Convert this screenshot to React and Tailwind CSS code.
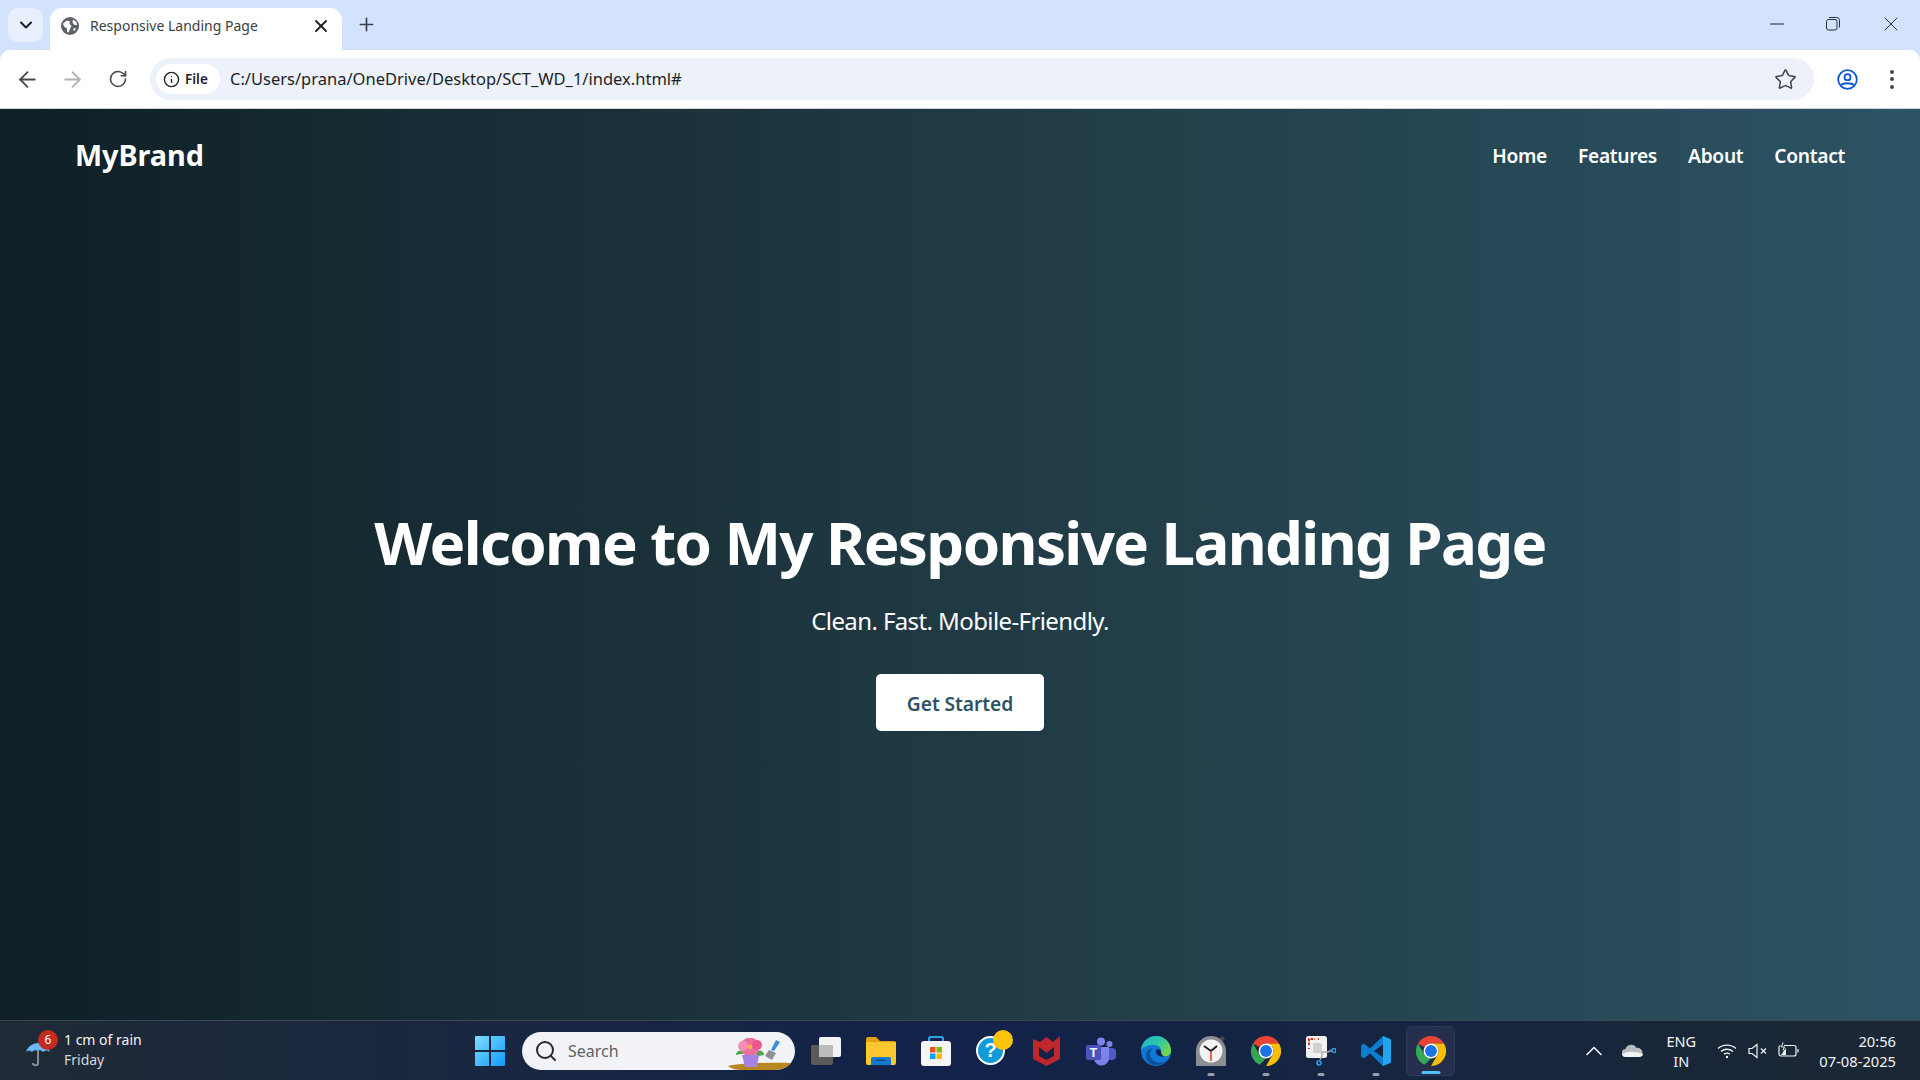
import { ArrowLeft, ArrowRight, RotateCw, Info, Star, X, Plus, ChevronDown, ChevronUp, Search, Minus } from 'lucide-react';

const NAV = ['Home', 'Features', 'About', 'Contact'];
const UI = "font-['Open_Sans','Noto_Sans',sans-serif]";

function Globe() {
  return (
    <svg width="18" height="18" viewBox="0 0 18 18">
      <circle cx="9" cy="9" r="9" fill="#5f6368" />
      <path d="M2 6.5 L6 3.5 L9 4.5 L8.5 7 L10.5 9 L9 12 L7.5 15.5 L6 15 L6 11.5 L3 9.5Z M12 2.5 L15.5 5 L16 8 L13.5 8 L11.5 5.5Z M13 11 L15 11.5 L13.5 14 L12 13Z" fill="#fff" />
    </svg>
  );
}

function RestoreIcon() {
  return (
    <svg width="14" height="14" viewBox="0 0 14 14" fill="none" stroke="#2b2f36" strokeWidth="1">
      <rect x="0.5" y="2.5" width="10.5" height="10.5" rx="2" />
      <path d="M3 0.5 H10.5 A3 3 0 0 1 13.5 3.5 V10.5" />
    </svg>
  );
}

function ProfileIcon() {
  return (
    <svg width="21" height="21" viewBox="0 0 21 21" fill="none" stroke="#0b57d0" strokeWidth="1.8">
      <circle cx="10.5" cy="10.5" r="9.3" />
      <circle cx="10.5" cy="8.2" r="3" />
      <path d="M4 16.2 C6 13.6 15 13.6 17 16.2" />
    </svg>
  );
}

function Umbrella() {
  return (
    <svg width="26" height="26" viewBox="0 0 26 26">
      <path d="M1 10 C3 3 10 1 13 1 C18 1 23 4 25 10 C22 8 20 8 18 10 C16 8 14 8 13 9 C11 8 9 8 7 10 C5 8 3 8 1 10Z" fill="#6cb8f7" />
      <path d="M13 9 V21 C13 24 8 24 8 21" fill="none" stroke="#8a8d90" strokeWidth="2" />
    </svg>
  );
}

function WinLogo() {
  return (
    <svg width="30" height="30" viewBox="0 0 30 30">
      <defs>
        <linearGradient id="wl" x1="0" y1="0" x2="1" y2="1">
          <stop offset="0" stopColor="#7fdcff" />
          <stop offset="1" stopColor="#0f9bff" />
        </linearGradient>
      </defs>
      <path d="M1 0 H14 V14 H0 V1 A1 1 0 0 1 1 0Z M16 0 H29 A1 1 0 0 1 30 1 V14 H16Z M0 16 H14 V30 H1 A1 1 0 0 1 0 29Z M16 16 H30 V29 A1 1 0 0 1 29 30 H16Z" fill="url(#wl)" />
    </svg>
  );
}

function FlowerPot() {
  return (
    <svg width="64" height="32" viewBox="0 0 64 32">
      <path d="M0 28 C14 25 50 24 64 25 C60 31 56 32 50 32 H14 C8 32 4 31 0 28Z" fill="#b8871f" />
      <path d="M8 17 C8 12 14 11 19 15 Z M26 15 C30 11 36 12 36 17 L30 18Z" fill="#4fa64a" />
      <circle cx="22" cy="9" r="9.5" fill="#ee6f9f" />
      <circle cx="15" cy="8" r="5" fill="#f48fb5" />
      <circle cx="29" cy="7" r="5" fill="#e85a8e" />
      <circle cx="22" cy="9" r="2.4" fill="#f4b23c" />
      <path d="M14 17 H31 L29 29 H17Z" fill="#a583e4" />
      <path d="M48 2 L52 4 L46 13 L43 12Z" fill="#3b8fdb" />
      <path d="M41 12 L48 15 L44 22 L37 18Z" fill="#8d9296" />
    </svg>
  );
}

function TaskView() {
  return (
    <svg width="30" height="28" viewBox="0 0 30 28">
      <rect x="8" y="0" width="22" height="20" rx="2" fill="#f3f3f3" />
      <rect x="0" y="8" width="22" height="20" rx="2" fill="#5a5a5a" />
      <rect x="8" y="8" width="14" height="12" fill="#bcbcbc" />
    </svg>
  );
}

function Explorer() {
  return (
    <svg width="30" height="28" viewBox="0 0 30 28">
      <path d="M0 2 A2 2 0 0 1 2 0 H10 L14 4 H28 A2 2 0 0 1 30 6 V10 H0Z" fill="#e5a00f" />
      <path d="M0 5 H30 V26 A2 2 0 0 1 28 28 H2 A2 2 0 0 1 0 26Z" fill="#fdc82f" />
      <path d="M5 28 V22 A2 2 0 0 1 7 20 H23 A2 2 0 0 1 25 22 V28Z" fill="#1479cf" />
      <rect x="10" y="22.5" width="10" height="1.5" fill="#0d4f8b" />
    </svg>
  );
}

function Store() {
  return (
    <svg width="30" height="30" viewBox="0 0 30 30">
      <path d="M8 6 V2 A1.5 1.5 0 0 1 9.5 1 H20.5 A1.5 1.5 0 0 1 22 2 V6" fill="none" stroke="#2aa7e8" strokeWidth="2" />
      <rect x="0" y="5" width="30" height="25" rx="3" fill="#f5f5f5" />
      <rect x="9" y="11" width="5.5" height="5.5" fill="#f25022" />
      <rect x="15.5" y="11" width="5.5" height="5.5" fill="#7fba00" />
      <rect x="9" y="17.5" width="5.5" height="5.5" fill="#00a4ef" />
      <rect x="15.5" y="17.5" width="5.5" height="5.5" fill="#ffb900" />
    </svg>
  );
}

function Help() {
  return (
    <div className="relative w-[30px] h-[30px]">
      <div className="w-[29px] h-[29px] rounded-full bg-[#0f9bd7] border-2 border-white flex items-center justify-center text-white font-bold text-[20px] leading-none font-['Liberation_Sans',sans-serif]">?</div>
      <div className="absolute -top-[6px] -right-[7px] w-5 h-5 rounded-full bg-[#fdc30a]" />
    </div>
  );
}

function McAfee() {
  return (
    <svg width="27" height="30" viewBox="0 0 27 30">
      <path d="M0 3 L7 6 L13.5 1 L20 6 L27 0 V23 L13.5 30 L0 23Z M6 11 V20 L13.5 24 L21 20 V11 L13.5 17Z" fill="#c0272d" fillRule="evenodd" />
    </svg>
  );
}

function Teams() {
  return (
    <svg width="30" height="30" viewBox="0 0 30 30">
      <circle cx="23.5" cy="8" r="3" fill="#7b83eb" />
      <rect x="19" y="12" width="11" height="12" rx="4" fill="#5059c9" />
      <circle cx="15" cy="5.5" r="4" fill="#7b83eb" />
      <path d="M8 11 H23 V22 A7.5 7.5 0 0 1 8 22Z" fill="#7b83eb" />
      <rect x="0" y="9" width="15" height="15" rx="2" fill="#4b53bc" />
      <text x="7.5" y="21" textAnchor="middle" fill="#fff" fontSize="12" fontWeight="700" fontFamily="Liberation Sans">T</text>
    </svg>
  );
}

function Edge() {
  return (
    <svg width="30" height="30" viewBox="0 0 30 30">
      <defs>
        <linearGradient id="eg" x1="0" y1="0" x2="1" y2="0.6">
          <stop offset="0" stopColor="#1fb1d8" />
          <stop offset="0.6" stopColor="#2fc9a0" />
          <stop offset="1" stopColor="#74d84c" />
        </linearGradient>
      </defs>
      <circle cx="15" cy="15" r="15" fill="#0f78d4" />
      <path d="M0 14 C1 5 8 0 15 0 C24 0 30 7 30 15 C30 19 26 21 22 20 C19 19 20 17 20 15 C20 11 17 9 13 9 C7 9 2 11 0 14Z" fill="url(#eg)" />
      <path d="M13 12 C9 13 8 18 10 22 C13 27 20 28 25 25 C21 30 10 31 6 24 C3 18 7 12 13 12Z" fill="#0b4f9e" />
      <path d="M15 14 C18 12 20 14 20 15 C20 18 21 20 24 20.4 C20 21 14 20 15 14Z" fill="#0f2350" />
    </svg>
  );
}

function ClockApp() {
  return (
    <svg width="30" height="30" viewBox="0 0 30 30">
      <path d="M23 3 L26 0 L29 3 L26 6Z" fill="#4a4a4a" />
      <path d="M0 15 A15 15 0 0 1 30 15 V30 H0Z" fill="#8b8e93" />
      <circle cx="15" cy="15" r="11.5" fill="#f2f2f2" />
      <path d="M15 15 L8 10 M15 15 L21 10" stroke="#222" strokeWidth="2" />
      <path d="M15 15 V25" stroke="#d83b1d" strokeWidth="1.5" />
    </svg>
  );
}

function Chrome() {
  return (
    <svg width="30" height="30" viewBox="0 0 48 48">
      <path d="M24 0 A24 24 0 0 1 44.8 12 H24 A12 12 0 0 0 13.6 18 L3.2 12 A24 24 0 0 1 24 0Z" fill="#ea4335" />
      <path d="M3.2 12 L13.6 30 A12 12 0 0 0 24 36 L13.6 46 A24 24 0 0 1 3.2 12Z" fill="#34a853" />
      <path d="M44.8 12 A24 24 0 0 1 24 48 L34.4 30 A12 12 0 0 0 34.4 18 L24 12Z" fill="#fbbc04" />
      <circle cx="24" cy="24" r="12" fill="#fff" />
      <circle cx="24" cy="24" r="9.5" fill="#1a73e8" />
    </svg>
  );
}

function Snip() {
  return (
    <svg width="30" height="30" viewBox="0 0 30 30">
      <rect x="0" y="0" width="21" height="22" rx="2.5" fill="#f2f2f2" />
      <path d="M3 9 V3 H9 M12 3 H13 M3 12 V13" fill="none" stroke="#c8321e" strokeWidth="2" strokeDasharray="2.4 1.4" />
      <path d="M7 7 H14 A2 2 0 0 1 16 9 V17 H7Z" fill="#d0d0d0" />
      <path d="M16 16 L16 20 L14 24 M16 16 L22 16 L26 14" fill="none" stroke="#a8a8a8" strokeWidth="1.4" />
      <circle cx="13" cy="27" r="2" fill="none" stroke="#2a9ee8" strokeWidth="1.6" />
      <circle cx="28" cy="14.5" r="2" fill="none" stroke="#2a9ee8" strokeWidth="1.6" />
    </svg>
  );
}

function VSCode() {
  return (
    <svg width="30" height="30" viewBox="0 0 30 30">
      <path d="M22 0 L30 3.5 V26.5 L22 30 L9 17.5 L3 22.5 L0 20.5 V9.5 L3 7.5 L9 12.5Z M22 8.5 L13 15 L22 21.5Z" fill="#0e7ccf" fillRule="evenodd" />
      <path d="M22 0 L30 3.5 V26.5 L22 30Z" fill="#23a4ee" />
    </svg>
  );
}

function Wifi() {
  return (
    <svg width="20" height="16" viewBox="0 0 20 16" fill="none" stroke="#f3f4f5" strokeWidth="1.4">
      <path d="M1 5.5 C6 1 14 1 19 5.5" />
      <path d="M4 8.5 C7.5 5.5 12.5 5.5 16 8.5" />
      <path d="M7 11.3 C8.7 10 11.3 10 13 11.3" />
      <circle cx="10" cy="14" r="1.2" fill="#f3f4f5" stroke="none" />
    </svg>
  );
}

function Muted() {
  return (
    <svg width="20" height="16" viewBox="0 0 20 16" fill="none" stroke="#f3f4f5" strokeWidth="1.2">
      <path d="M1 5.5 H4 L9 1.5 V14.5 L4 10.5 H1Z" />
      <path d="M13 5.5 L18 10.5 M18 5.5 L13 10.5" />
    </svg>
  );
}

function Battery() {
  return (
    <svg width="21" height="17" viewBox="0 0 21 17" fill="none" stroke="#f3f4f5" strokeWidth="1.2">
      <path d="M6 3.5 H16 A2 2 0 0 1 18 5.5 V12 A2 2 0 0 1 16 14 H3 A2 2 0 0 1 1 12 V5.5 A2 2 0 0 1 2.5 3.5" />
      <path d="M20 7 V10.5" />
      <path d="M3 13 L8 6 V13Z" fill="#f3f4f5" stroke="none" />
      <path d="M5 0.5 L3.5 5 H6.5 L5 8.5" strokeWidth="1" />
    </svg>
  );
}

function CloudIcon() {
  return (
    <svg width="21" height="13" viewBox="0 0 21 13">
      <path d="M4 13 A4 4 0 0 1 3.5 5 A6 6 0 0 1 14.5 4 A4.5 4.5 0 0 1 17 13Z" fill="#b9bcbf" />
      <path d="M4 13 C2 13 0.5 12 0.3 10.5 C4 7 12 7 21 10 C21 12 19 13 17 13Z" fill="#f4f4f4" />
    </svg>
  );
}

function Dot({ active }) {
  return <span className={active ? 'absolute -bottom-[10px] left-1/2 -translate-x-1/2 w-[19px] h-[3px] rounded-full bg-[#4cc2ff]' : 'absolute -bottom-[10px] left-1/2 -translate-x-1/2 w-[7px] h-[3px] rounded-full bg-[#9a9ea8]'} />;
}

function Pinned({ children, dot }) {
  return (
    <div className="relative w-[30px] h-[30px] flex items-center justify-center">
      {children}
      {dot && <Dot />}
    </div>
  );
}

export default function App() {
  return (
    <div className={`w-[1920px] h-[1080px] overflow-hidden flex flex-col ${UI}`}>
      {/* browser chrome */}
      <div className="h-[50px] bg-[#d3e3fd] flex items-start pl-2 pt-2 shrink-0">
        <div className="w-[35px] h-[34px] rounded-[10px] bg-[#e9f0fd] flex items-center justify-center">
          <ChevronDown size={20} strokeWidth={2.4} color="#1f1f1f" />
        </div>
        <div className="ml-[7px] w-[292px] h-[42px] bg-white rounded-t-[12px] flex items-center pl-[11px] pr-[13px] pb-[7px]">
          <Globe />
          <span className="ml-[11px] text-[14px] text-[#3c4043] flex-1 font-['Noto_Sans',sans-serif]">Responsive Landing Page</span>
          <X size={20} strokeWidth={2.2} color="#1f1f1f" className="-mx-[2px]" />
        </div>
        <div className="ml-[15px] mt-[4px] h-[24px] flex items-center">
          <Plus size={21} strokeWidth={1.9} color="#3c4043" className="-mx-[1.5px]" />
        </div>
        <div className="ml-auto flex items-center h-[30px] mt-[1px] pr-[20px] gap-[42px]">
          <Minus size={22} strokeWidth={1.1} color="#1f1f1f" className="-mx-[4px]" />
          <RestoreIcon />
          <X size={24} strokeWidth={0.9} color="#1f1f1f" className="-mx-[3px]" />
        </div>
      </div>
      <div className="h-[58px] bg-[#d3e3fd] shrink-0">
        <div className="h-full bg-white rounded-t-[10px] flex items-center pl-[18px] pr-[17px]">
          <ArrowLeft size={25} strokeWidth={1.7} color="#444746" className="-mx-[3px]" />
          <ArrowRight size={25} strokeWidth={1.7} color="#b0b2b4" className="ml-[23px] -mr-[3px]" />
          <RotateCw size={20} strokeWidth={1.9} color="#444746" className="ml-[25.5px] -mr-[1.5px]" />
          <div className="ml-[24px] w-[1664px] h-[42px] rounded-full bg-[#ecf1fa] flex items-center pl-[6px] pr-[19px]">
            <div className="h-[30px] w-[64px] rounded-full bg-white flex items-center pl-[7px] gap-[5px]">
              <Info size={17} strokeWidth={1.9} color="#1f1f1f" />
              <span className="text-[13.5px] font-semibold text-[#1f1f1f] font-['Noto_Sans',sans-serif]">File</span>
            </div>
            <span className="ml-[10px] text-[16.5px] text-[#1f1f1f] flex-1 font-['Noto_Sans',sans-serif]">C:/Users/prana/OneDrive/Desktop/SCT_WD_1/index.html#</span>
            <Star size={23} strokeWidth={1.6} color="#444746" className="-mx-[2px]" />
          </div>
          <div className="ml-[23px]"><ProfileIcon /></div>
          <div className="ml-[32px] flex flex-col gap-[3.5px]">
            <span className="w-[4px] h-[4px] rounded-full bg-[#444746]" />
            <span className="w-[4px] h-[4px] rounded-full bg-[#444746]" />
            <span className="w-[4px] h-[4px] rounded-full bg-[#444746]" />
          </div>
        </div>
      </div>

      {/* page */}
      <div className="flex-1 border-t border-[#cfd3d8] bg-linear-to-r from-[#0f2027] via-[#203a43] to-[#2c5364] text-white flex flex-col font-['Noto_Sans',sans-serif]">
        <nav className="flex items-center justify-between pl-[75px] pr-[75px] pt-[25px] pb-[1px]">
          <span className="text-[28.8px] font-bold tracking-[-0.05px] leading-[42px]">MyBrand</span>
          <div className="flex items-center gap-[31px] mt-[3px]">
            {NAV.map((n) => <a key={n} className="text-[19.2px] font-semibold tracking-[-0.3px]">{n}</a>)}
          </div>
        </nav>
        <div className="flex-1 flex flex-col items-center pt-[325px]">
          <h1 className="text-[60px] font-bold leading-[80px] tracking-[-1.63px]">Welcome to My Responsive Landing Page</h1>
          <p className="mt-[22px] text-[24px] leading-[34px] tracking-[-0.6px]">Clean. Fast. Mobile-Friendly.</p>
          <button className="mt-[36px] w-[168px] h-[57px] pt-[3px] rounded-[5px] bg-white text-[#2c5364] text-[19.2px] font-semibold tracking-[-0.05px]">Get Started</button>
        </div>
      </div>

      {/* taskbar */}
      <div className="h-[60px] shrink-0 border-t border-[#3f4550] bg-linear-to-r from-[#1f2a36] via-[#12224a] to-[#1b2733] flex items-center text-[#f3f4f5] font-['Noto_Sans',sans-serif]">
        <div className="w-[475px] pl-[25px] flex items-center shrink-0">
          <div className="relative w-[26px] h-[26px] mt-[8px]">
            <Umbrella />
            <span className="absolute -top-[12px] left-[13px] w-5 h-5 rounded-full bg-[#c42b1c] text-white text-[12px] flex items-center justify-center">6</span>
          </div>
          <div className="ml-[13px] flex flex-col text-[14px] leading-[20px] -mt-[1px]">
            <span>1 cm of rain</span>
            <span className="text-[#d5d8dc]">Friday</span>
          </div>
        </div>
        <WinLogo />
        <div className="ml-[17px] w-[273px] h-[38px] rounded-full bg-[#f1f3f6] flex items-center pl-[13px] relative overflow-hidden">
          <Search size={24} strokeWidth={2} color="#2b2b2b" className="-mx-[1.5px]" />
          <span className="ml-[12px] text-[16px] text-[#5f6266]">Search</span>
          <div className="absolute right-[3px] bottom-0"><FlowerPot /></div>
        </div>
        <div className="ml-[16px] flex items-center gap-[25px]">
          <Pinned><TaskView /></Pinned>
          <Pinned><Explorer /></Pinned>
          <Pinned><Store /></Pinned>
          <Pinned><Help /></Pinned>
          <Pinned><McAfee /></Pinned>
          <Pinned><Teams /></Pinned>
          <Pinned><Edge /></Pinned>
          <Pinned dot><ClockApp /></Pinned>
          <Pinned dot><Chrome /></Pinned>
          <Pinned dot><Snip /></Pinned>
          <Pinned dot><VSCode /></Pinned>
          <div className="-ml-[10px] w-[49px] h-[50px] rounded-[5px] bg-[#252f4d] border border-[#2e3857] flex items-center justify-center relative -mr-2">
            <Chrome />
            <span className="absolute bottom-[1px] left-1/2 -translate-x-1/2 w-[19px] h-[3px] rounded-full bg-[#4cc2ff]" />
          </div>
        </div>
        <div className="ml-auto pr-[24px] flex items-center">
          <ChevronUp size={28} strokeWidth={1.4} color="#f3f4f5" className="-mx-[4px]" />
          <div className="ml-[18px]"><CloudIcon /></div>
          <div className="ml-[16px] w-[44px] text-center text-[14.5px] leading-[20px]">
            <div>ENG</div>
            <div>IN</div>
          </div>
          <div className="ml-[14px]"><Wifi /></div>
          <div className="ml-[11px]"><Muted /></div>
          <div className="ml-[10px]"><Battery /></div>
          <div className="ml-[20px] text-right text-[14.7px] leading-[20px]">
            <div>20:56</div>
            <div>07-08-2025</div>
          </div>
        </div>
      </div>
    </div>
  );
}
